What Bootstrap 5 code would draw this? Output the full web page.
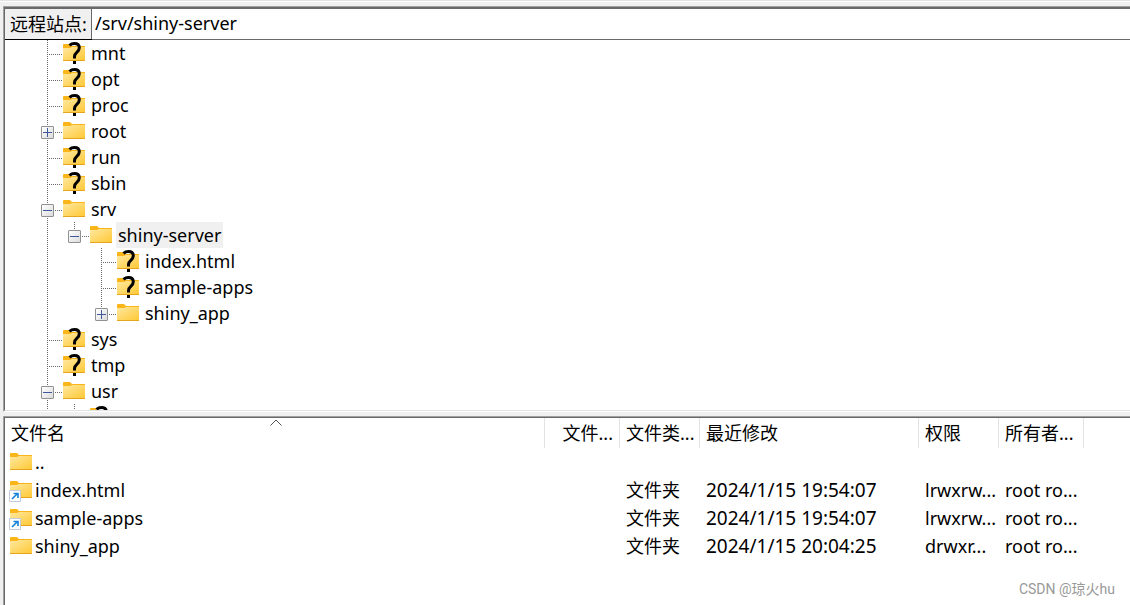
<!DOCTYPE html>
<html lang="zh-CN">
<head>
<meta charset="utf-8">
<meta name="viewport" content="width=device-width, initial-scale=1">
<title>远程站点</title>
<link href="https://cdn.jsdelivr.net/npm/bootstrap@5.3.0/dist/css/bootstrap.min.css" rel="stylesheet">
<style>
  body { background: #f0f0f0; color: #000; font: 18px/26px "Noto Sans", "Noto Sans CJK SC", sans-serif; }
  .window-edge { height: 6px; border-top: 1px solid #e3e3e3; box-shadow: inset 0 1px #fff; }
  .pane { margin-left: 3px; border-left: 1px solid #a0a0a0; border-top: 1px solid #a0a0a0; }
  .pane-inner { border-left: 1px solid #696969; border-top: 1px solid #696969; background: #fff; }
  .site-pane { border-bottom: 1px solid #fff; }
  .site-pane .pane-inner { border-bottom: 1px solid #e3e3e3; }
  .file-pane { flex: 0 0 189px; margin-top: 4px; }

  .address { height: 32px; border-top: 1px solid #696969; border-bottom: 1px solid #696969; }
  .address label { width: 87px; padding-left: 5px; background: #f0f0f0; border-right: 1px solid #696969; box-shadow: 0 1px #000; }
  .address input { padding: 0 3px 2px; border: 0; outline: 0; color: #000; }

  .tree, .tree ul { list-style: none; margin: 0; padding: 0; }
  .tree { padding-left: 36px; }
  .tree ul { margin-left: 27px; }
  .tree li { background: repeating-linear-gradient(#696969 0 1px, transparent 1px 2px) 6px 0 / 1px 100% no-repeat; }
  .tree ul > li:last-child { background-size: 1px 14px; }
  .tree-row { height: 26px; }
  .gutter { width: 22px; height: 26px; background: repeating-linear-gradient(90deg, #696969 0 1px, transparent 1px 2px) 6px 14px / 15px 1px no-repeat; }
  .toggle { width: 13px; height: 13px; margin-top: 8px; padding: 0; border: 1px solid #919191; border-radius: 1px; background: linear-gradient(135deg, #fff, #dcdcdc); }
  .toggle svg { display: block; }
  .node-name { margin-left: 4px; padding: 0 2px; color: #000; text-decoration: none; }
  .node-name.selected { background: #f0f0f0; }

  .files { width: 100%; table-layout: fixed; border-collapse: separate; border-spacing: 0; }
  .files th { height: 30px; padding: 0 6px; font-weight: 400; border-right: 1px solid #e3e3e3; position: relative; }
  .files th:last-child { border: 0; }
  .files td { height: 28px; padding: 0 6px; }
  .files th, .files td { white-space: nowrap; overflow: hidden; }
  .files td:first-child { padding-left: 4px; }
  .files .date { font-size: 19px; }
  .file-icon { margin-right: 3px; }
  .col-size { width: 75px; }
  .col-kind { width: 80px; }
  .col-time { width: 219px; }
  .col-owner { width: 85px; }
  .col-rest { width: 46px; }
  .sort { position: absolute; top: 1px; left: 50%; margin-left: -5px; }
  .watermark { position: absolute; right: 15px; bottom: 3px; color: #999; font: 14px/26px Roboto, "Noto Sans CJK SC", sans-serif; }
</style>
</head>
<body>
<svg class="position-absolute" width="0" height="0" aria-hidden="true">
  <defs>
    <linearGradient id="gold" x1="0" y1="0" x2="1" y2="1">
      <stop offset="0" stop-color="#ffe8a0"/><stop offset="1" stop-color="#ffc937"/>
    </linearGradient>
    <symbol id="folder" viewBox="0 0 22 26">
      <path d="M0 5q0-1 1-1h6l2 2h13v4H0z" fill="#f9b51a"/>
      <path d="M0 8h7l2-1h13v13H0z" fill="url(#gold)"/>
      <path d="M0 20h22v1H0z" fill="#e7a51d"/>
    </symbol>
    <symbol id="unknown" viewBox="0 0 22 26">
      <use href="#folder" width="22" height="26"/>
      <path d="M6.500 5.300C8 4 9.500 3.500 11.500 3.500c3.300 0 4.800 1.800 4.800 4.300 0 4.700-4.800 4.500-4.800 8.700v2" fill="none" stroke="#000" stroke-width="3"/>
      <path d="M10 21h3v3h-3z"/>
    </symbol>
    <symbol id="link" viewBox="0 0 23 28">
      <use href="#folder" x="1" y="1" width="22" height="26"/>
      <path d="M.5 14.500h11v11H.5z" fill="#fff" stroke="#c5cbdc"/>
      <path d="M3 23l5.500-5.500M4.500 17.500h4.500V22" fill="none" stroke="#1683d8" stroke-width="1.600"/>
    </symbol>
    <symbol id="plain" viewBox="0 0 23 28">
      <use href="#folder" x="1" y="1" width="22" height="26"/>
    </symbol>
  </defs>
</svg>

<div class="d-flex flex-column vh-100 overflow-hidden position-relative">
  <div class="window-edge flex-shrink-0"></div>

  <section class="pane site-pane d-flex flex-column flex-fill overflow-hidden">
    <div class="pane-inner d-flex flex-column flex-fill overflow-hidden">
      <div class="address d-flex flex-shrink-0">
        <label for="remote" class="d-flex align-items-center flex-shrink-0 text-nowrap">远程站点:</label>
        <input id="remote" type="text" class="flex-fill" value="/srv/shiny-server">
      </div>
      <nav class="flex-fill overflow-hidden" aria-label="远程站点">
        <ul class="tree" id="tree"></ul>
      </nav>
    </div>
  </section>

  <section class="pane file-pane">
    <div class="pane-inner h-100">
      <table class="files">
        <colgroup>
          <col><col class="col-size"><col class="col-kind"><col class="col-time"><col class="col-kind"><col class="col-owner"><col class="col-rest">
        </colgroup>
        <thead>
          <tr>
            <th scope="col">文件名<svg class="sort" width="12" height="8" viewBox="0 0 12 8"><path d="M.5 6.500L6 1l5.500 5.500" fill="none" stroke="#555"/></svg></th>
            <th scope="col" class="text-end">文件...</th>
            <th scope="col">文件类...</th>
            <th scope="col">最近修改</th>
            <th scope="col">权限</th>
            <th scope="col">所有者...</th>
            <th></th>
          </tr>
        </thead>
        <tbody id="files"></tbody>
      </table>
    </div>
  </section>
  <div class="watermark">CSDN @琼火hu</div>
</div>

<script src="https://cdn.jsdelivr.net/npm/bootstrap@5.3.0/dist/js/bootstrap.bundle.min.js"></script>
<script>
  // state: '+' collapsed, '-' expanded; a node without one has not been listed yet
  const tree = [
    { name: 'mnt' }, { name: 'opt' }, { name: 'proc' },
    { name: 'root', state: '+' },
    { name: 'run' }, { name: 'sbin' },
    { name: 'srv', state: '-', children: [
      { name: 'shiny-server', state: '-', selected: true, children: [
        { name: 'index.html' }, { name: 'sample-apps' }, { name: 'shiny_app', state: '+' }
      ] }
    ] },
    { name: 'sys' }, { name: 'tmp' },
    { name: 'usr', state: '-', children: [{ name: '' }] }
  ];
  const toggle = s => s ? `<button type="button" class="toggle" aria-label="${s === '+' ? '展开' : '折叠'}"><svg width="11" height="11"><path d="M1 5.500h9${s === '+' ? 'M5.500 1v9' : ''}" stroke="#3f5a9c"/></svg></button>` : '';
  const node = n => `<li><div class="tree-row d-flex"><span class="gutter d-flex align-items-start">${toggle(n.state)}</span>` +
    `<svg width="22" height="26"><use href="#${n.state ? 'folder' : 'unknown'}"/></svg>` +
    (n.name ? `<a href="#" class="node-name${n.selected ? ' selected' : ''}">${n.name}</a>` : '') + '</div>' +
    (n.children ? `<ul>${n.children.map(node).join('')}</ul>` : '') + '</li>';
  document.getElementById('tree').innerHTML = tree.map(node).join('');

  const files = [
    ['plain', '..', '', '', '', ''],
    ['link', 'index.html', '文件夹', '2024/1/15 19:54:07', 'lrwxrw...', 'root ro...'],
    ['link', 'sample-apps', '文件夹', '2024/1/15 19:54:07', 'lrwxrw...', 'root ro...'],
    ['plain', 'shiny_app', '文件夹', '2024/1/15 20:04:25', 'drwxr...', 'root ro...']
  ];
  document.getElementById('files').innerHTML = files.map(([icon, name, kind, time, mode, owner]) =>
    `<tr><td><div class="d-flex align-items-center"><svg class="file-icon" width="23" height="28"><use href="#${icon}"/></svg>${name}</div></td>` +
    `<td></td><td>${kind}</td><td class="date">${time}</td><td>${mode}</td><td>${owner}</td><td></td></tr>`).join('');
</script>
</body>
</html>
